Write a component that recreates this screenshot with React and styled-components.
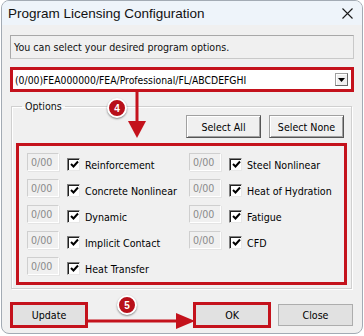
import React from 'react'
import styled, {createGlobalStyle} from 'styled-components'

const RED = '#c4121c'
const DIALOG_FONT = '"DejaVu Sans Condensed", "Liberation Sans", Arial, sans-serif'

const left = ['Reinforcement', 'Concrete Nonlinear', 'Dynamic', 'Implicit Contact', 'Heat Transfer']
const right = ['Steel Nonlinear', 'Heat of Hydration', 'Fatigue', 'CFD']

const Check = () => (
	<CheckBox>
		<svg width="9" height="9" viewBox="0 0 9 9">
			<path d="M1 4 L3.5 6.5 L8 1.5" stroke="#000" strokeWidth="2" fill="none" />
		</svg>
	</CheckBox>
)

const OptionRow = ({label}) => (
	<Row>
		<CodeBox>0/00</CodeBox>
		<Check />
		<Label>{label}</Label>
	</Row>
)

const App = () => (
	<>
		<GlobalStyle />
		<Window>
			{/* Title bar */}
			<TitleBar>
				<Title>Program Licensing Configuration</Title>
				<svg width="11" height="11" viewBox="0 0 11 11">
					<path d="M0.5 0.5 L10.5 10.5 M10.5 0.5 L0.5 10.5" stroke="#1a1a1a" strokeWidth="1.1" />
				</svg>
			</TitleBar>

			<Body>
				<InfoBox>You can select your desired program options.</InfoBox>

				<ComboFrame>
					<Combo>
						<span>(0/00)FEA000000/FEA/Professional/FL/ABCDEFGHI</span>
						<DropButton>
							<svg width="7" height="4" viewBox="0 0 7 4">
								<path d="M0 0 H7 L3.5 4 Z" fill="#000" />
							</svg>
						</DropButton>
					</Combo>
				</ComboFrame>

				<Group>
					<Legend>Options</Legend>
					<ButtonBar>
						<ClassicButton>Select All</ClassicButton>
						<ClassicButton>Select None</ClassicButton>
					</ButtonBar>
					<OptionsFrame>
						<Column>
							{left.map((l) => <OptionRow key={l} label={l} />)}
						</Column>
						<Column>
							{right.map((l) => <OptionRow key={l} label={l} />)}
						</Column>
					</OptionsFrame>
				</Group>

				<Footer>
					<Highlight>
						<FlatButton>Update</FlatButton>
					</Highlight>
					<FooterRight>
						<Highlight>
							<FlatButton>OK</FlatButton>
						</Highlight>
						<FlatButton $plain>Close</FlatButton>
					</FooterRight>
				</Footer>

				{/* Annotations */}
				<Badge style={{left: 105, top: 73}}>4</Badge>
				<Arrow style={{left: 125, top: 66}} width="20" height="48" viewBox="0 0 20 48">
					<path d="M10 0 V31" stroke={RED} strokeWidth="3" />
					<path d="M1 30 H19 L10 47 Z" fill={RED} />
				</Arrow>
				<Badge style={{left: 115, top: 270}}>5</Badge>
				<Arrow style={{left: 86, top: 287}} width="108" height="18" viewBox="0 0 108 18">
					<path d="M0 9 H90" stroke={RED} strokeWidth="3" />
					<path d="M88 1 V17 L107 9 Z" fill={RED} />
				</Arrow>
			</Body>
		</Window>
	</>
)

const GlobalStyle = createGlobalStyle`
	body {
		margin: 0;
		background: #ffffff;
		font-family: ${DIALOG_FONT};
	}
`

const Window = styled.div`
	width: 362px;
	height: 334px;
	margin-left: 1px;
	box-sizing: border-box;
	border: 1px solid #a3abb4;
	border-radius: 8px;
	background: #f0f0f0;
	overflow: hidden;
	display: flex;
	flex-direction: column;
`

const TitleBar = styled.div`
	height: 24px;
	background: #eef4fa;
	display: flex;
	align-items: center;
	justify-content: space-between;
	padding: 0 9px 0 6px;
`

const Title = styled.span`
	font-family: "Liberation Sans", Arial, sans-serif;
	font-size: 13.5px;
	color: #111;
`

const Body = styled.div`
	position: relative;
	flex: 1;
	padding: 10px 8px 0 8px;
	display: flex;
	flex-direction: column;
`

const InfoBox = styled.div`
	height: 24px;
	box-sizing: border-box;
	border: 1px solid #c9c9c9;
	border-top-color: #a8a8a8;
	border-left-color: #a8a8a8;
	font-size: 10.6px;
	color: #111;
	display: flex;
	align-items: center;
	padding-left: 3px;
`

const Highlight = styled.div`
	border: 3px solid ${RED};
	display: flex;
`

const ComboFrame = styled(Highlight)`
	margin-top: 8px;
`

const Combo = styled.div`
	flex: 1;
	height: 17px;
	background: #fff;
	display: flex;
	align-items: center;
	justify-content: space-between;
	padding: 0 2px 0 1px;
	font-size: 10.3px;
	color: #000;
	border: 1px solid #fff;
`

const DropButton = styled.div`
	width: 13px;
	height: 13px;
	box-sizing: border-box;
	background: #f0f0f0;
	border: 1px solid #a0a0a0;
	border-right-color: #696969;
	border-bottom-color: #696969;
	box-shadow: inset 1px 1px 0 #fff;
	display: flex;
	align-items: center;
	justify-content: center;
`

const Group = styled.fieldset`
	margin: 8px 2px 0 1px;
	padding: 3px 4px 4px 4px;
	border: 1px solid #d0d0d0;
	box-shadow: inset 1px 1px 0 #fff, 1px 1px 0 #fff;
	display: flex;
	flex-direction: column;
	height: 189px;
	box-sizing: border-box;
`

const Legend = styled.legend`
	font-size: 10.6px;
	color: #111;
	padding: 0 3px;
	margin-left: 6px;
`

const ButtonBar = styled.div`
	display: flex;
	justify-content: flex-end;
	gap: 8px;
	padding-right: 3px;
`

const ClassicButton = styled.div`
	width: 75px;
	height: 23px;
	box-sizing: border-box;
	border: 1px solid #a0a0a0;
	border-right-color: #555;
	border-bottom-color: #555;
	box-shadow: inset 1px 1px 0 #fff, inset -1px -1px 0 #a0a0a0;
	font-size: 10.6px;
	color: #000;
	display: flex;
	align-items: center;
	justify-content: center;
	background: #f0f0f0;
`

const OptionsFrame = styled.div`
	margin-top: 5px;
	border: 3px solid ${RED};
	height: 142px;
	box-sizing: border-box;
	display: grid;
	grid-template-columns: 162px 1fr;
	padding: 7px 0 0 8px;
`

const Column = styled.div`
	display: flex;
	flex-direction: column;
	gap: 8px;
`

const Row = styled.div`
	display: flex;
	align-items: center;
	height: 18px;
`

const CodeBox = styled.div`
	width: 32px;
	height: 18px;
	box-sizing: border-box;
	border: 1px solid #cfcfcf;
	border-right-color: #fff;
	border-bottom-color: #fff;
	box-shadow: 1px 1px 0 #e4e4e4;
	color: #8a8a8a;
	font-size: 10.6px;
	padding: 2px 0 0 3px;
`

const CheckBox = styled.div`
	width: 13px;
	height: 13px;
	box-sizing: border-box;
	margin: 4px 5px 0 8px;
	background: #fff;
	border: 1px solid #808080;
	border-right-color: #e8e8e8;
	border-bottom-color: #e8e8e8;
	box-shadow: inset 1px 1px 0 #202020;
	display: flex;
	align-items: center;
	justify-content: center;
	padding: 1px 0 0 1px;
`

const Label = styled.span`
	font-size: 10.6px;
	color: #000;
	margin-top: 6px;
`

const Footer = styled.div`
	margin-top: 13px;
	display: flex;
	justify-content: space-between;
	align-items: center;
`

const FooterRight = styled.div`
	display: flex;
	align-items: center;
	gap: 7px;
	padding-right: 1px;
`

const FlatButton = styled.div`
	width: ${(p) => (p.$plain ? 75 : 72)}px;
	height: ${(p) => (p.$plain ? 22 : 20)}px;
	box-sizing: border-box;
	background: #e1e1e1;
	border: 1px solid ${(p) => (p.$plain ? '#adadad' : '#e1e1e1')};
	font-size: 10.6px;
	color: #000;
	display: flex;
	align-items: center;
	justify-content: center;
`

const Badge = styled.div`
	position: absolute;
	width: 20px;
	height: 20px;
	box-sizing: border-box;
	border-radius: 50%;
	background: #b8101a;
	border: 2px solid #fff;
	box-shadow: 0 1px 2px rgba(0, 0, 0, 0.45);
	color: #fff;
	font-family: "Liberation Sans", Arial, sans-serif;
	font-size: 10px;
	font-weight: bold;
	display: flex;
	align-items: center;
	justify-content: center;
`

const Arrow = styled.svg`
	position: absolute;
`

export default App
